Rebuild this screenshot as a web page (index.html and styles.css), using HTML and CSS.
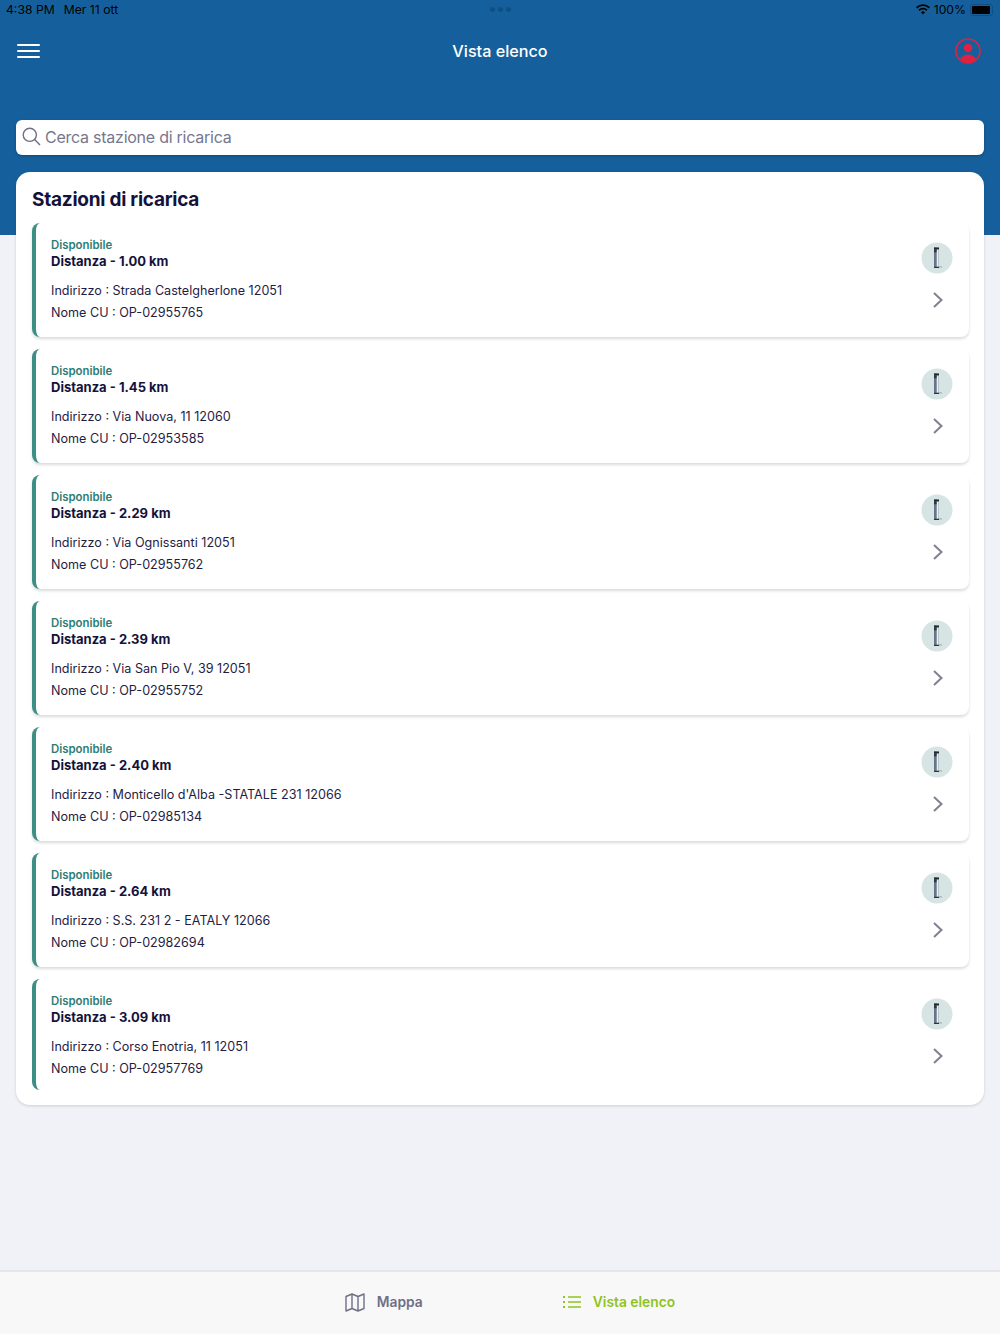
FILE: index.html
```html
<!DOCTYPE html>
<html>
<head>
<meta charset="utf-8"/>
<link rel="stylesheet" href="styles.css">
<title>Vista elenco</title>
</head>
<body>

<svg class="defs" width="0" height="0">
<symbol id="unit" viewBox="0 0 32 32">
<circle cx="16" cy="16" r="15.5" fill="#d6e5e3"/>
<rect x="13" y="5.5" width="5" height="20.5" fill="#aeb7c2"/>
<rect x="15.6" y="8" width="1.6" height="16.5" fill="#eef1f3"/>
<rect x="13" y="5.5" width="2.6" height="20.5" fill="#687488"/>
<rect x="13" y="5.5" width="5" height="1.8" fill="#23272f"/>
<rect x="13" y="7.3" width="2.6" height="3" fill="#2f343e"/>
<rect x="13" y="24.8" width="5" height="1.2" fill="#30343e"/>
<rect x="18" y="24.4" width="3" height="1" fill="#9aa3ad"/>
</symbol>
<symbol id="chev" viewBox="0 0 12 18">
<path d="M2 2l7.5 7L2 16" fill="none" stroke="#7f8091" stroke-width="2"/>
</symbol>
</svg>

<header class="top">
<div class="status">
<div class="status-l"><span>4:38 PM</span><span>Mer 11 ott</span></div>
<div class="dots"><i></i><i></i><i></i></div>
<div class="status-r">
<svg width="14" height="11" viewBox="0 0 14 11"><path d="M7 10.5L4.9 8.2a3 3 0 0 1 4.2 0zM3.6 6.9L2.4 5.6a6.6 6.6 0 0 1 9.2 0l-1.2 1.3a4.9 4.9 0 0 0-6.8 0zM1.2 4.4L0 3.1a10 10 0 0 1 14 0l-1.2 1.3a8.3 8.3 0 0 0-11.6 0z" fill="#000"/></svg>
<span>100%</span>
<div class="batt"><b></b></div>
</div>
</div>
<nav class="bar">
<div class="burger"><i></i><i></i><i></i></div>
<h1>Vista elenco</h1>
<svg class="user" width="26" height="26" viewBox="0 0 26 26"><defs><clipPath id="c"><circle cx="13" cy="13" r="11.8"/></clipPath></defs><circle cx="13" cy="13" r="12" fill="none" stroke="#e0213f" stroke-width="1.6"/><circle cx="13" cy="10" r="4.3" fill="#e0213f"/><ellipse cx="13" cy="24" rx="8.5" ry="7.5" fill="#e0213f" clip-path="url(#c)"/></svg>
</nav>
<div class="search">
<svg width="19" height="19" viewBox="0 0 19 19"><circle cx="7.8" cy="7.8" r="6.6" fill="none" stroke="#6f6f86" stroke-width="1.4"/><path d="M12.6 12.6l5.4 5.4" stroke="#6f6f86" stroke-width="1.4"/></svg>
<span>Cerca stazione di ricarica</span>
</div>
</header>

<main class="panel">
<h2>Stazioni di ricarica</h2>
<ul class="list">

<li class="card">
<div class="info">
<p class="state">Disponibile</p>
<p class="dist">Distanza - 1.00 km</p>
<p class="line addr">Indirizzo : Strada Castelgherlone 12051</p>
<p class="line">Nome CU : OP-02955765</p>
</div>
<div class="side"><svg class="unit"><use href="#unit"/></svg><svg class="chev"><use href="#chev"/></svg></div>
</li>

<li class="card">
<div class="info">
<p class="state">Disponibile</p>
<p class="dist">Distanza - 1.45 km</p>
<p class="line addr">Indirizzo : Via Nuova, 11 12060</p>
<p class="line">Nome CU : OP-02953585</p>
</div>
<div class="side"><svg class="unit"><use href="#unit"/></svg><svg class="chev"><use href="#chev"/></svg></div>
</li>

<li class="card">
<div class="info">
<p class="state">Disponibile</p>
<p class="dist">Distanza - 2.29 km</p>
<p class="line addr">Indirizzo : Via Ognissanti 12051</p>
<p class="line">Nome CU : OP-02955762</p>
</div>
<div class="side"><svg class="unit"><use href="#unit"/></svg><svg class="chev"><use href="#chev"/></svg></div>
</li>

<li class="card">
<div class="info">
<p class="state">Disponibile</p>
<p class="dist">Distanza - 2.39 km</p>
<p class="line addr">Indirizzo : Via San Pio V, 39 12051</p>
<p class="line">Nome CU : OP-02955752</p>
</div>
<div class="side"><svg class="unit"><use href="#unit"/></svg><svg class="chev"><use href="#chev"/></svg></div>
</li>

<li class="card">
<div class="info">
<p class="state">Disponibile</p>
<p class="dist">Distanza - 2.40 km</p>
<p class="line addr">Indirizzo : Monticello d'Alba -STATALE 231 12066</p>
<p class="line">Nome CU : OP-02985134</p>
</div>
<div class="side"><svg class="unit"><use href="#unit"/></svg><svg class="chev"><use href="#chev"/></svg></div>
</li>

<li class="card">
<div class="info">
<p class="state">Disponibile</p>
<p class="dist">Distanza - 2.64 km</p>
<p class="line addr">Indirizzo : S.S. 231 2 - EATALY 12066</p>
<p class="line">Nome CU : OP-02982694</p>
</div>
<div class="side"><svg class="unit"><use href="#unit"/></svg><svg class="chev"><use href="#chev"/></svg></div>
</li>

<li class="card">
<div class="info">
<p class="state">Disponibile</p>
<p class="dist">Distanza - 3.09 km</p>
<p class="line addr">Indirizzo : Corso Enotria, 11 12051</p>
<p class="line">Nome CU : OP-02957769</p>
</div>
<div class="side"><svg class="unit"><use href="#unit"/></svg><svg class="chev"><use href="#chev"/></svg></div>
</li>

</ul>
</main>

<footer class="tabs">
<a class="tab">
<svg width="20" height="19" viewBox="0 0 20 19"><path d="M1 3.5L7 1l6 2.5L19 1v14.5L13 18l-6-2.5L1 18zM7 1v14.5M13 3.5V18" fill="none" stroke="#6f6f86" stroke-width="1.4" stroke-linejoin="round"/></svg>
<span>Mappa</span>
</a>
<a class="tab on">
<svg width="18" height="12" viewBox="0 0 18 12"><path d="M5 1h13M5 6h13M5 11h13" stroke="#8fc31f" stroke-width="1.4"/><path d="M0 1h2M0 6h2M0 11h2" stroke="#8fc31f" stroke-width="2"/></svg>
<span>Vista elenco</span>
</a>
</footer>

</body>
</html>
```

FILE: styles.css
```css
html,body{margin:0;padding:0}
ul{margin:0;padding:0;list-style:none}
p,h1,h2{margin:0}
.defs{position:absolute}

body{width:1000px;height:1334px;display:flex;flex-direction:column;overflow:hidden;
background:#f0f2f7;color:#14123a;font-family:Inter,"Liberation Sans",sans-serif;}

/** header **/
.top{height:235px;flex:none;box-sizing:border-box;padding:0 16px;background:#15609c;}
.status{height:19px;margin:0 -10px 1px;display:grid;grid-template-columns:1fr auto 1fr;align-items:center;color:#000;font-size:12.2px;}
.status-l{display:flex;gap:9px}
.status-r{display:flex;gap:4px;align-items:center;justify-content:flex-end;margin-right:1px}
.dots{display:flex;gap:3px}
.dots i{width:5px;height:5px;border-radius:50%;background:#0d4f86}
.batt{flex:none;width:23px;height:12px;box-sizing:border-box;padding:1px;border:1px solid #0d4f86;border-radius:3px}
.batt b{display:block;width:18px;height:100%;background:#000;border-radius:1px}

.bar{height:62px;display:grid;grid-template-columns:1fr auto 1fr;align-items:center}
.bar h1{color:#fff;font-size:16.2px;font-weight:500}
.burger{width:23px;margin-left:1px;display:flex;flex-direction:column;gap:4px}
.burger i{height:2px;background:#fff;border-radius:1px}
.user{justify-self:end;margin-right:3px}

.search{height:35px;box-sizing:border-box;margin-top:38px;padding:0 0 2px 6px;display:flex;align-items:center;gap:4px;
background:#fff;border-radius:6px;box-shadow:0 1px 3px rgba(0,0,0,.25);color:#77778c;font-size:16px;letter-spacing:-.25px;}

/** list **/
.panel{margin:-63px 16px 0;padding:16px 15px 15px 16px;background:#fff;border-radius:14px;box-shadow:0 1px 3px rgba(0,0,0,.15);}
.panel h2{font-size:19px;line-height:24px;font-weight:700;letter-spacing:-.25px}
.list{margin-top:11px;display:flex;flex-direction:column;gap:12px}
.card{height:114px;box-sizing:border-box;padding:16px 16px 0 15px;display:flex;justify-content:space-between;
background:#fff;border-left:4px solid #3d8f85;border-radius:8px;box-shadow:0 2px 3px rgba(0,0,0,.14);}
.card:last-child{height:111px;box-shadow:none}
.state{font-size:11.4px;line-height:13px;font-weight:600;color:#2f7d72}
.dist{font-size:13px;line-height:19px;font-weight:700}
.line{font-size:12.6px;line-height:21.5px;color:#1f1d44}
.addr{margin-top:9px}
.side{display:flex;flex-direction:column;align-items:center;gap:17px;margin-top:3px}
.unit{width:32px;height:32px}
.chev{width:12px;height:18px;margin-left:2px}

/** tabs **/
.tabs{margin-top:auto;height:62px;box-sizing:content-box;flex:none;padding:0 0 0 20px;display:flex;justify-content:center;align-items:flex-start;gap:140px;
background:#f8f8f8;border-top:2px solid #e6e6e9;font-size:13.8px;font-weight:600;color:#6f6f86;}
.tab{display:flex;align-items:center;gap:12px;height:60px}
.tab.on{color:#8fc31f}
```
